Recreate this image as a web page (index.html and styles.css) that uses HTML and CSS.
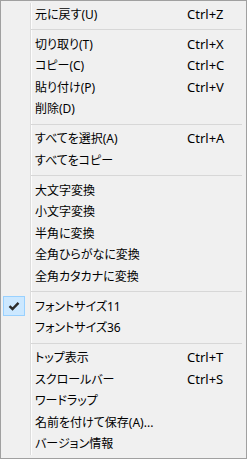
FILE: index.html
```html
<!DOCTYPE html>
<html>
<head>
  <meta charset="UTF-8">
  <title>Context Menu</title>
  <link rel="stylesheet" href="styles.css">
</head>
<body>
  <div class="menu">
    <div class="list">
      <div class="item"><span class="check"></span><span class="label">元に戻す(U)</span><span class="key">Ctrl+Z</span></div>
      <div class="sep"></div>
      <div class="item"><span class="check"></span><span class="label">切り取り(T)</span><span class="key">Ctrl+X</span></div>
      <div class="item"><span class="check"></span><span class="label">コピー(C)</span><span class="key">Ctrl+C</span></div>
      <div class="item"><span class="check"></span><span class="label">貼り付け(P)</span><span class="key">Ctrl+V</span></div>
      <div class="item"><span class="check"></span><span class="label">削除(D)</span><span class="key"></span></div>
      <div class="sep"></div>
      <div class="item"><span class="check"></span><span class="label">すべてを選択(A)</span><span class="key">Ctrl+A</span></div>
      <div class="item"><span class="check"></span><span class="label">すべてをコピー</span><span class="key"></span></div>
      <div class="sep"></div>
      <div class="item"><span class="check"></span><span class="label">大文字変換</span><span class="key"></span></div>
      <div class="item"><span class="check"></span><span class="label">小文字変換</span><span class="key"></span></div>
      <div class="item"><span class="check"></span><span class="label">半角に変換</span><span class="key"></span></div>
      <div class="item"><span class="check"></span><span class="label">全角ひらがなに変換</span><span class="key"></span></div>
      <div class="item"><span class="check"></span><span class="label">全角カタカナに変換</span><span class="key"></span></div>
      <div class="sep"></div>
      <div class="item">
        <span class="check checked">
          <svg width="12" height="10" viewBox="0 0 12 10"><path d="M1.5 5.2 L4.5 8 L10.5 1.8" fill="none" stroke="#2b2b2b" stroke-width="2.4"/></svg>
        </span>
        <span class="label">フォントサイズ11</span><span class="key"></span>
      </div>
      <div class="item"><span class="check"></span><span class="label">フォントサイズ36</span><span class="key"></span></div>
      <div class="sep"></div>
      <div class="item"><span class="check"></span><span class="label">トップ表示</span><span class="key">Ctrl+T</span></div>
      <div class="item"><span class="check"></span><span class="label">スクロールバー</span><span class="key">Ctrl+S</span></div>
      <div class="item"><span class="check"></span><span class="label">ワードラップ</span><span class="key"></span></div>
      <div class="item"><span class="check"></span><span class="label">名前を付けて保存(A)...</span><span class="key"></span></div>
      <div class="item"><span class="check"></span><span class="label">バージョン情報</span><span class="key"></span></div>
    </div>
  </div>
</body>
</html>
```
FILE: styles.css
```css
body {
  margin: 0;
  background: #f0f0f0;
  font-family: "Noto Sans", "Noto Sans CJK JP", sans-serif;
  font-size: 12px;
  color: #000;
}
.menu {
  width: 247px;
  height: 459px;
  box-sizing: border-box;
  border: 1px solid #a0a0a0;
  background: #f0f0f0;
  padding: 2px;
}
.list {
  height: 100%;
  box-sizing: border-box;
  padding-top: 0.5px;
  background-image: linear-gradient(to right, transparent 27px, #dcdcdc 27px, #dcdcdc 28px, #fdfdfd 28px, #fdfdfd 29px, transparent 29px);
  background-repeat: no-repeat;
  background-size: 100% 452px;
}
.item {
  display: grid;
  grid-template-columns: 32px 152px auto;
  align-items: center;
  height: 21.5px;
  line-height: 21.5px;
  white-space: nowrap;
  font-feature-settings: "palt";
}
.key {
  font-size: 13px;
}
.check {
  width: 22px;
  height: 20px;
  box-sizing: border-box;
  display: flex;
  align-items: center;
  justify-content: center;
}
.checked {
  background: #cce8ff;
  border: 1px solid #99d1ff;
}
.sep {
  height: 1px;
  background: #d7d7d7;
  margin: 4px 2px 3.5px 28px;
}
```
